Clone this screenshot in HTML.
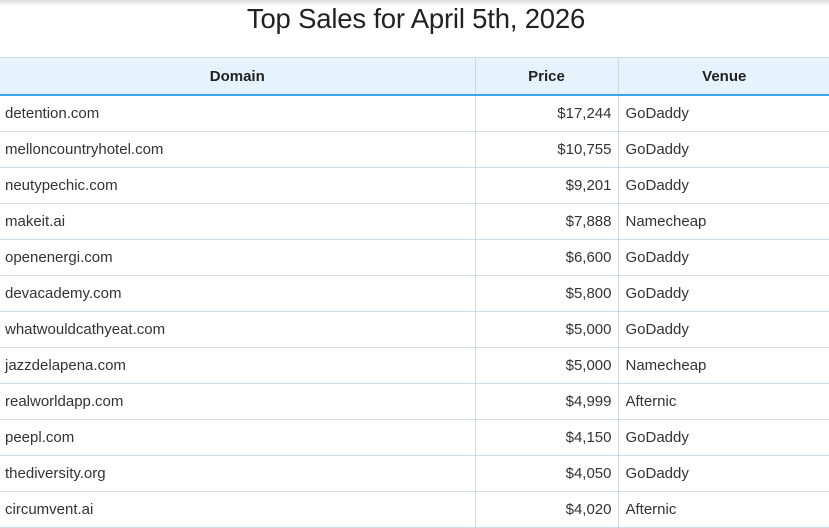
<!DOCTYPE html>
<html><head><style>
body{margin:0;background:#fff;font-family:"Liberation Sans",sans-serif;color:#222;width:829px;height:519px;overflow:hidden;position:relative}
.sh{position:absolute;top:0;left:0;right:0;height:6px;background:linear-gradient(#ddd,#fff)}
h1{margin:0;position:absolute;top:3px;left:0;width:832px;text-align:center;font-weight:normal;font-size:27.5px;color:#222;letter-spacing:-0.2px}
table{position:absolute;top:57px;left:0;width:831px;border-collapse:collapse;font-size:15px}
th{background:#e6f3fc;height:36px;font-size:15px;font-weight:bold;border-right:1px solid #cddbe6;border-top:1px solid #cddbe6;border-bottom:2px solid #3ba5ee;padding:0;color:#222}
td{height:35px;padding:0 6px 0 5px;border-right:1px solid #cddbe6;border-bottom:1px solid #cddbe6;color:#333}
td:nth-child(2){text-align:right}
td:nth-child(3){padding-left:7px}
</style></head><body>
<div class="sh"></div>
<h1>Top Sales for April 5th, 2026</h1>
<table>
<colgroup><col style="width:475px"><col style="width:143px"><col></colgroup>
<tr><th>Domain</th><th>Price</th><th>Venue</th></tr>
<tr><td>detention.com</td><td>$17,244</td><td>GoDaddy</td></tr>
<tr><td>melloncountryhotel.com</td><td>$10,755</td><td>GoDaddy</td></tr>
<tr><td>neutypechic.com</td><td>$9,201</td><td>GoDaddy</td></tr>
<tr><td>makeit.ai</td><td>$7,888</td><td>Namecheap</td></tr>
<tr><td>openenergi.com</td><td>$6,600</td><td>GoDaddy</td></tr>
<tr><td>devacademy.com</td><td>$5,800</td><td>GoDaddy</td></tr>
<tr><td>whatwouldcathyeat.com</td><td>$5,000</td><td>GoDaddy</td></tr>
<tr><td>jazzdelapena.com</td><td>$5,000</td><td>Namecheap</td></tr>
<tr><td>realworldapp.com</td><td>$4,999</td><td>Afternic</td></tr>
<tr><td>peepl.com</td><td>$4,150</td><td>GoDaddy</td></tr>
<tr><td>thediversity.org</td><td>$4,050</td><td>GoDaddy</td></tr>
<tr><td>circumvent.ai</td><td>$4,020</td><td>Afternic</td></tr>
</table>
</body></html>
